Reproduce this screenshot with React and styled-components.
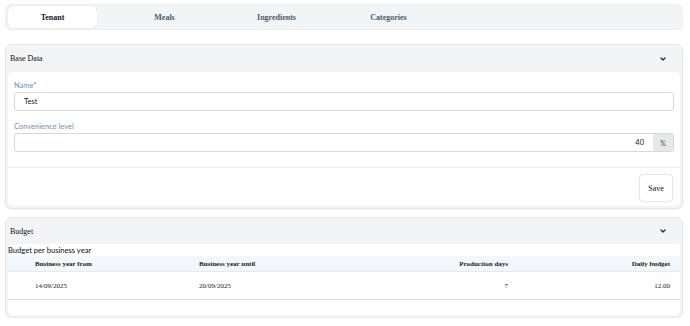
import React from "react";
import styled, { createGlobalStyle } from "styled-components";

const Global = createGlobalStyle`
  html, body { margin: 0; padding: 0; background: #ffffff; }
  body { font-family: "Liberation Serif", serif; color: #111827; }
  * { box-sizing: border-box; }
`;

const Page = styled.div`
  padding: 4px 7px 0 5px;
  display: flex;
  flex-direction: column;
`;

const TabBar = styled.div`
  height: 26px;
  background: #f3f4f6;
  border: 1px solid #eceef1;
  border-radius: 6px;
  padding: 1px 2px;
  display: flex;
  gap: 23px;
`;

const Tab = styled.div`
  width: 89px;
  height: 22px;
  display: flex;
  align-items: center;
  justify-content: center;
  font-family: "Liberation Serif", serif;
  font-weight: bold;
  font-size: 8px;
  color: ${(p) => (p.$active ? "#111827" : "#4b5a70")};
  background: ${(p) => (p.$active ? "#ffffff" : "transparent")};
  border-radius: 5px;
  box-shadow: ${(p) => (p.$active ? "0 0 1px rgba(0,0,0,0.18)" : "none")};
`;

const Panel = styled.div`
  margin-top: ${(p) => p.$mt}px;
  background: #f3f4f6;
  border: 1px solid #e6e8eb;
  border-radius: 6px;
  padding: 0 2px 2px 2px;
  box-shadow: 0 1px 1px rgba(0,0,0,0.04);
`;

const PanelHeader = styled.div`
  height: ${(p) => p.$h}px;
  display: flex;
  align-items: center;
  justify-content: space-between;
  padding: 0 14px 0 2px;
  font-family: "Liberation Serif", serif;
  font-size: 8px;
  color: #111;
`;

const PanelBody = styled.div`
  background: #ffffff;
  border-radius: 5px 4px 5px 5px;
`;

const FormArea = styled.div`
  padding: 9px 6px 15px 6px;
  display: flex;
  flex-direction: column;
`;

const Label = styled.div`
  font-family: "Lato", sans-serif;
  font-size: 7.5px;
  line-height: 9px;
  color: #7290b0;
  margin-top: ${(p) => p.$mt || 0}px;
  margin-bottom: 2px;
`;

const InputBox = styled.div`
  height: 19px;
  border: 1px solid #d6d8db;
  border-radius: 3px;
  display: flex;
  align-items: stretch;
  overflow: hidden;
  font-family: "Lato", sans-serif;
  font-size: 7.5px;
  color: #222;
`;

const InputText = styled.div`
  flex: 1;
  display: flex;
  align-items: center;
  justify-content: ${(p) => (p.$right ? "flex-end" : "flex-start")};
  padding: ${(p) => (p.$right ? "0 9px 0 0" : "0 0 0 9px")};
`;

const Addon = styled.div`
  width: 20px;
  background: #e6e7e9;
  display: flex;
  align-items: center;
  justify-content: center;
  color: #555;
  font-size: 7px;
`;

const Footer = styled.div`
  border-top: 1px solid #eeeff1;
  padding: 6px 7px 4px;
  display: flex;
  justify-content: flex-end;
`;

const SaveButton = styled.button`
  width: 34px;
  height: 28px;
  background: #fff;
  border: 1px solid #e3e5e8;
  border-radius: 4px;
  font-family: "Liberation Serif", serif;
  font-size: 8px;
  color: #111;
  padding: 0;
`;

const Caption = styled.div`
  font-family: "Lato", sans-serif;
  font-size: 7.6px;
  line-height: 12px;
  color: #111;
`;

const Row = styled.div`
  display: grid;
  grid-template-columns: 164px 164px 182px 1fr;
  align-items: center;
  height: ${(p) => p.$h}px;
  background: ${(p) => p.$bg || "transparent"};
  border-bottom: ${(p) => p.$border};
  font-family: "Liberation Serif", serif;
  font-size: 7px;
  font-weight: ${(p) => (p.$bold ? "bold" : "normal")};
  color: #1a1a1a;
`;

const Cell = styled.div`
  text-align: ${(p) => (p.$right ? "right" : "left")};
  padding: ${(p) => (p.$right ? "0 10px 0 0" : "0 0 0 27px")};
`;

const TableEnd = styled.div`
  height: 15px;
`;

const Chevron = () => (
  <svg width="6" height="4" viewBox="0 0 6 4">
    <polyline points="1,1 3,3 5,1" fill="none" stroke="#1f2937" strokeWidth="1.3" strokeLinecap="round" strokeLinejoin="round" />
  </svg>
);

export default function App() {
  const tabs = ["Tenant", "Meals", "Ingredients", "Categories"];
  return (
    <>
      <Global />
      <Page>
        <TabBar>
          {tabs.map((t, i) => (
            <Tab key={t} $active={i === 0}>{t}</Tab>
          ))}
        </TabBar>

        <Panel $mt={14}>
          <PanelHeader $h={27}>
            <span>Base Data</span>
            <Chevron />
          </PanelHeader>
          <PanelBody>
            <FormArea>
              <Label>Name*</Label>
              <InputBox>
                <InputText>Test</InputText>
              </InputBox>
              <Label $mt={11}>Convenience level</Label>
              <InputBox>
                <InputText $right>40</InputText>
                <Addon>%</Addon>
              </InputBox>
            </FormArea>
            <Footer>
              <SaveButton>Save</SaveButton>
            </Footer>
          </PanelBody>
        </Panel>

        <Panel $mt={8}>
          <PanelHeader $h={26}>
            <span>Budget</span>
            <Chevron />
          </PanelHeader>
          <PanelBody>
            <Caption>Budget per business year</Caption>
            <Row $h={16} $bg="#f4f7fa" $bold $border="1px solid #e3e9f0">
              <Cell>Business year from</Cell>
              <Cell>Business year until</Cell>
              <Cell $right>Production days</Cell>
              <Cell $right>Daily budget</Cell>
            </Row>
            <Row $h={28} $border="1.5px solid #d5dde7">
              <Cell>14/09/2025</Cell>
              <Cell>20/09/2025</Cell>
              <Cell $right>7</Cell>
              <Cell $right>12.00</Cell>
            </Row>
            <TableEnd />
          </PanelBody>
        </Panel>
      </Page>
    </>
  );
}
